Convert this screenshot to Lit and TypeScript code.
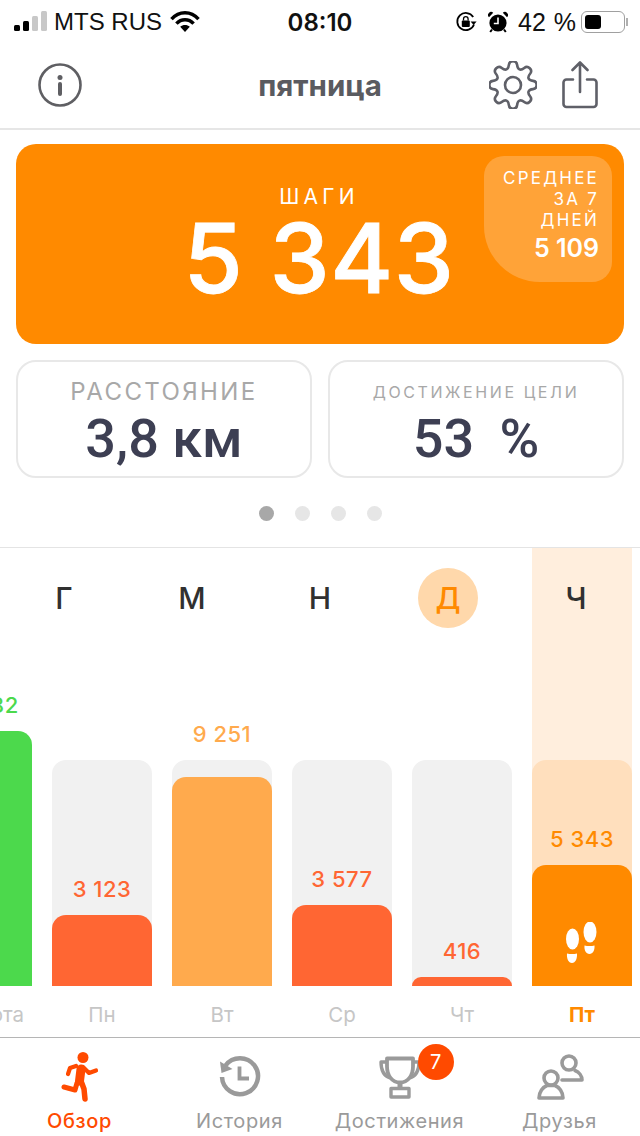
import { LitElement, css, html, svg } from "lit";
import { customElement } from "lit/decorators.js";

interface DayBar {
  day: string;
  value: string;
  fill: number;
  color: string;
  gap: number;
  today?: boolean;
}

const ORANGE = "#ff8a00";
const RED = "#ff6633";

const bars: DayBar[] = [
  { day: "Суббота", value: "10 682", fill: 255, color: "#4cd94c", gap: 12 },
  { day: "Пн", value: "3 123", fill: 71, color: RED, gap: 12 },
  { day: "Вт", value: "9 251", fill: 209, color: "#ffaa4d", gap: 29 },
  { day: "Ср", value: "3 577", fill: 81, color: RED, gap: 12 },
  { day: "Чт", value: "416", fill: 9, color: RED, gap: 12 },
  { day: "Пт", value: "5 343", fill: 121, color: ORANGE, gap: 12, today: true },
];

const letters = ["Г", "М", "Н", "Д", "Ч"];
const dots = [true, false, false, false];

// rounded 8-tooth outline, corners smoothed through edge midpoints
function gearPath(cx: number, cy: number, outer: number, inner: number): string {
  const step = Math.PI / 4;
  const pts: [number, number][] = [];
  for (let i = 0; i < 8; i++) {
    const a = -Math.PI / 2 + i * step;
    const ring: [number, number][] = [
      [inner, a - 0.34 * step],
      [outer, a - 0.2 * step],
      [outer, a + 0.2 * step],
      [inner, a + 0.34 * step],
    ];
    for (const [r, t] of ring) {
      pts.push([cx + r * Math.cos(t), cy + r * Math.sin(t)]);
    }
  }
  const mid = (p: number[], q: number[]) =>
    `${((p[0] + q[0]) / 2).toFixed(2)} ${((p[1] + q[1]) / 2).toFixed(2)}`;
  let d = `M${mid(pts[pts.length - 1], pts[0])}`;
  pts.forEach((p, i) => {
    d += `Q${p[0].toFixed(2)} ${p[1].toFixed(2)} ${mid(p, pts[(i + 1) % pts.length])}`;
  });
  return d + "Z";
}

const wifiIcon = svg`<svg width="30" height="22" viewBox="0 0 30 22" fill="none" stroke="#000" stroke-width="3.4">
  <path d="M1.5 8.2C9-.4 21-.4 28.5 8.2" />
  <path d="M6.4 12.6c4.8-5.2 12.4-5.2 17.2 0" />
  <path d="M15 21l-4.8-5.2c2.7-2.4 6.9-2.4 9.6 0z" fill="#000" stroke="none" />
</svg>`;

const lockIcon = svg`<svg width="22" height="22" viewBox="0 0 22 22" fill="none">
  <path d="M19 13.5A8.6 8.6 0 1 1 18.2 6" stroke="#000" stroke-width="1.8" />
  <path d="M21.6 10.4h-6l3 3.6z" fill="#000" />
  <rect x="6.8" y="9.5" width="8" height="6.5" rx="1" fill="#000" />
  <path d="M8.5 9.5V8a2.3 2.3 0 0 1 4.6 0v1.5" stroke="#000" stroke-width="1.3" />
</svg>`;

const alarmIcon = svg`<svg width="20" height="22" viewBox="0 0 20 22">
  <circle cx="10" cy="12" r="8.6" fill="#000" />
  <path d="M1 6.2 5.2 1.8a3 3 0 0 0-4.2 4.4zM19 6.2l-4.2-4.4A3 3 0 0 1 19 6.2z" fill="#000" />
  <path d="M10 6.5v6H5.8" fill="none" stroke="#fff" stroke-width="1.6" />
  <path d="M4 18.5l-1.8 2.5M16 18.5l1.8 2.5" stroke="#000" stroke-width="2" />
</svg>`;

const infoIcon = svg`<svg width="44" height="44" viewBox="0 0 44 44" fill="none">
  <circle cx="22" cy="22" r="20.5" stroke="#5f5f63" stroke-width="2.6" />
  <circle cx="22" cy="14.5" r="2.5" fill="#5f5f63" />
  <path d="M22 21v10" stroke="#5f5f63" stroke-width="4" stroke-linecap="round" />
</svg>`;

const gearIcon = svg`<svg width="48" height="48" viewBox="0 0 48 48" fill="none" stroke="#5f6068" stroke-width="2.6">
  <path d=${gearPath(24, 24, 24, 17)} />
  <circle cx="24" cy="24" r="8" />
</svg>`;

const shareIcon = svg`<svg width="36" height="48" viewBox="0 0 36 48" fill="none" stroke="#5f6068" stroke-width="2.6" stroke-linecap="round" stroke-linejoin="round">
  <path d="M11 18.5H4.5a3 3 0 0 0-3 3V43a3 3 0 0 0 3 3h27a3 3 0 0 0 3-3V21.5a3 3 0 0 0-3-3H25" />
  <path d="M18 31V2M10.5 9 18 1.5 25.500 9" />
</svg>`;

const footprints = svg`<svg width="34" height="44" viewBox="0 0 34 44" fill="#fff">
  <ellipse cx="7.5" cy="17" rx="6.5" ry="10.5" />
  <path d="M2 31.500c3 .8 7 .8 10 0 .4 5-1.500 9.500-5 9.500s-5.500-4.500-5-9.500z" />
  <ellipse cx="25" cy="10" rx="6.5" ry="10.5" />
  <path d="M19.500 23.500c3 .8 7 .8 10 0 .4 4.500-1.500 8.500-5 8.500s-5.500-4-5-8.500z" />
</svg>`;

const runnerIcon = svg`<svg width="48" height="54" viewBox="0 0 48 54" fill="none" stroke="#ff4a00" stroke-linecap="round" stroke-linejoin="round">
  <circle cx="27" cy="7.5" r="5.5" fill="#ff4a00" stroke="none" />
  <path d="M25 19l-1.500 12" stroke-width="9" />
  <path d="M27 17l6 6 7-2.500M20 16l-6 2-2 6" stroke-width="4.2" />
  <path d="M25 31l3 8 1 10" stroke-width="5.5" />
  <path d="M21 33l-2 7-11-3" stroke-width="5" />
</svg>`;

const historyIcon = svg`<svg width="44" height="44" viewBox="0 0 44 44" fill="none" stroke="#9a9a9a" stroke-width="4.5">
  <path d="M7.500 10.500A18 18 0 1 1 4 22" />
  <path d="M2 6.500l1.500 11.500L14.500 14z" fill="#9a9a9a" stroke="none" />
  <path d="M21.500 11.500V23.500H31" stroke-width="3.8" />
</svg>`;

const trophyIcon = svg`<svg width="44" height="44" viewBox="0 0 44 44" fill="none" stroke="#9a9a9a" stroke-width="3.4" stroke-linejoin="round">
  <path d="M9 3.500h26v8c0 9-5 16-13 16s-13-7-13-16z" fill="#fff" stroke-width="3.8" />
  <path d="M9 7H3c0 9 3 14 9 16M35 7h6c0 9-3 14-9 16" />
  <path d="M22 27v8" stroke-width="5" />
  <rect x="13" y="33.5" width="18" height="8.5" />
</svg>`;

const friendsIcon = svg`<svg width="48" height="48" viewBox="0 0 48 48" fill="none" stroke="#9a9a9a" stroke-width="3.6" stroke-linecap="round" stroke-linejoin="round">
  <circle cx="33" cy="10" r="7" />
  <path d="M26 27h20c0-4-3-8-7-9.500" />
  <circle cx="15" cy="25" r="7" />
  <path d="M3 45c0-6 4-11 8-12.500h8c4 1.500 8 6.500 8 12.500z" />
</svg>`;

@customElement("app-root")
export class AppRoot extends LitElement {
  static styles = css`
    :host {
      display: flex;
      flex-direction: column;
      width: 640px;
      height: 1136px;
      overflow: hidden;
      background: #fff;
      font-family: Inter, "Noto Sans", sans-serif;
    }

    .status {
      display: grid;
      grid-template-columns: 1fr auto 1fr;
      align-items: center;
      height: 44px;
      padding: 0 12px 0 14px;
      font-size: 23px;
      color: #111;
    }
    .status-left,
    .status-right {
      display: flex;
      align-items: center;
    }
    .status-right {
      justify-content: flex-end;
    }
    .signal {
      display: flex;
      align-items: flex-end;
      gap: 3px;
      height: 20px;
      margin: -2px 7px 0 0;
    }
    .signal i {
      width: 6px;
      border-radius: 1.5px;
      background: #000;
    }
    .signal i.off {
      background: #c8c8c8;
    }
    .carrier {
      margin-right: 8px;
      font-family: "Liberation Sans", sans-serif;
      font-size: 24px;
    }
    .time {
      font-weight: 600;
      font-size: 24px;
      margin-left: -2px;
    }
    .gap {
      width: 11px;
    }
    .pct {
      margin: 0 5px 0 10px;
      font-family: "Liberation Sans", sans-serif;
      font-size: 25px;
      word-spacing: 1px;
    }
    .battery {
      display: flex;
      align-items: center;
      width: 44px;
      height: 22px;
      padding: 3px;
      box-sizing: border-box;
      border: 1.5px solid #a0a0a0;
      border-radius: 6px;
    }
    .battery i {
      width: 16px;
      height: 14px;
      border-radius: 3px;
      background: #000;
    }
    .battery-cap {
      width: 2px;
      height: 8px;
      margin-left: 1px;
      background: #b0b0b0;
    }

    .topbar {
      display: grid;
      grid-template-columns: 1fr auto 1fr;
      align-items: center;
      height: 86px;
      padding: 0 38px 2px;
      box-sizing: border-box;
      border-bottom: 2px solid #e6e6e6;
    }
    .topbar h1 {
      margin: 0;
      font-size: 29.5px;
      font-weight: 700;
      color: #5a5b60;
    }
    .topbar svg {
      display: block;
    }
    .actions {
      display: flex;
      justify-content: flex-end;
      align-items: center;
      gap: 25px;
      margin-right: 4px;
    }

    .summary {
      display: flex;
      flex-direction: column;
      gap: 16px;
      padding: 14px 16px 0;
    }
    .hero {
      display: flex;
      justify-content: space-between;
      height: 200px;
      padding: 12px;
      box-sizing: border-box;
      border-radius: 20px;
      background: #ff8a00;
      color: #fff;
    }
    .hero-main {
      flex: 1;
      padding-left: 114px;
      padding-top: 28px;
      text-align: center;
      margin-right: -12px;
    }
    .hero-label {
      font-size: 21px;
      letter-spacing: 4.2px;
      line-height: 26px;
    }
    .hero-value {
      margin-top: 10px;
      font-size: 96px;
      line-height: 76px;
      font-weight: 500;
      letter-spacing: 0.5px;
      -webkit-text-stroke: 0.8px #fff;
    }
    .avg {
      width: 128px;
      height: 126px;
      padding: 12px 13px 0 0;
      box-sizing: border-box;
      border-radius: 20px 20px 20px 56px;
      background: rgba(255, 255, 255, 0.22);
      text-align: right;
      font-size: 17px;
      line-height: 21px;
      letter-spacing: 2.2px;
    }
    .avg b {
      display: block;
      margin-top: 7px;
      font-size: 25px;
      font-weight: 600;
      letter-spacing: 0;
    }
    .stats {
      display: grid;
      grid-template-columns: 1fr 1fr;
      gap: 16px;
    }
    .stat {
      height: 118px;
      box-sizing: border-box;
      padding-top: 15px;
      border: 2px solid #e8e8e8;
      border-radius: 20px;
      text-align: center;
    }
    .stat-label {
      height: 30px;
      line-height: 30px;
      font-size: 24px;
      letter-spacing: 2.4px;
      color: #a8a8a8;
    }
    .stat-label.small {
      font-size: 16px;
      letter-spacing: 2.6px;
    }
    .stat-value {
      margin-top: 2px;
      font-family: Roboto, sans-serif;
      font-size: 54px;
      line-height: 60px;
      font-weight: 500;
      color: #3d3f53;
    }
    .stat-value.wide {
      word-spacing: 12px;
    }
    .dots {
      display: flex;
      justify-content: center;
      gap: 21px;
      padding: 28px 0 26px;
    }
    .dots i {
      width: 15px;
      height: 15px;
      border-radius: 50%;
      background: #e6e6e6;
    }
    .dots i.on {
      background: #a8a8a8;
    }

    .chart {
      position: relative;
      flex: 1;
      display: flex;
      flex-direction: column;
      overflow: hidden;
      border-top: 1px solid #e4e4e4;
    }
    .today-band {
      position: absolute;
      left: 532px;
      top: 0;
      width: 100px;
      height: 240px;
      background: #ffeedd;
    }
    .letters {
      position: relative;
      display: grid;
      grid-template-columns: repeat(5, 128px);
      height: 100px;
      align-items: center;
      text-align: center;
      font-size: 30px;
      font-weight: 500;
      color: #303030;
    }
    .letters span {
      justify-self: center;
      width: 60px;
      height: 60px;
      line-height: 60px;
    }
    .letters .current {
      border-radius: 50%;
      background: #ffd8ab;
      color: #ff8a00;
    }
    .columns {
      position: relative;
      display: grid;
      grid-template-columns: repeat(6, 100px);
      gap: 20px;
      margin: 112px 0 0 -68px;
    }
    .col {
      display: flex;
      flex-direction: column;
      align-items: stretch;
    }
    .track {
      display: flex;
      flex-direction: column;
      justify-content: flex-end;
      height: 226px;
      border-radius: 14px 14px 0 0;
      background: #f1f1f1;
    }
    .track.today {
      background: #ffdfbd;
    }
    .val {
      flex: none;
      text-align: center;
      font-size: 22px;
      line-height: 28px;
      letter-spacing: 0.5px;
      font-weight: 500;
    }
    .fill {
      flex: none;
      display: flex;
      align-items: flex-end;
      justify-content: center;
      border-radius: 14px 14px 0 0;
    }
    .fill svg {
      margin-bottom: 20px;
    }
    .day {
      height: 50px;
      line-height: 58px;
      text-align: center;
      white-space: nowrap;
      font-size: 20.5px;
      color: #c6c6c6;
    }
    .day.today {
      font-weight: 700;
      color: #ff8a00;
    }

    nav {
      display: grid;
      grid-template-columns: repeat(4, 160px);
      height: 99px;
      box-sizing: border-box;
      border-top: 1px solid #b5b5b5;
      background: #fff;
    }
    .tab {
      display: flex;
      flex-direction: column;
      align-items: center;
      font-size: 20px;
      letter-spacing: 0.6px;
      color: #9a9a9a;
    }
    .tab.active {
      font-weight: 500;
      color: #ff4a00;
    }
    .tab-icon {
      position: relative;
      display: flex;
      align-items: center;
      justify-content: center;
      height: 71px;
      padding-top: 6px;
      box-sizing: border-box;
    }
    .tab-label {
      line-height: 24px;
      margin-left: -1px;
    }
    .badge {
      position: absolute;
      left: 40px;
      top: 6px;
      width: 36px;
      height: 36px;
      border-radius: 50%;
      background: #ff4a00;
      color: #fff;
      font-size: 20px;
      line-height: 36px;
      text-align: center;
    }
  `;

  private renderBar(bar: DayBar) {
    return html`
      <div class="col">
        <div class="track ${bar.today ? "today" : ""}">
          <div class="val" style="color:${bar.color};margin-bottom:${bar.gap}px">
            ${bar.value}
          </div>
          <div class="fill" style="height:${bar.fill}px;background:${bar.color}">
            ${bar.today ? footprints : ""}
          </div>
        </div>
        <div class="day ${bar.today ? "today" : ""}">${bar.day}</div>
      </div>
    `;
  }

  protected render() {
    return html`
      <div class="status">
        <div class="status-left">
          <div class="signal">
            <i style="height:6px"></i><i style="height:10px"></i>
            <i class="off" style="height:15px"></i>
            <i class="off" style="height:20px"></i>
          </div>
          <span class="carrier">MTS RUS</span>
          ${wifiIcon}
        </div>
        <div class="time">08:10</div>
        <div class="status-right">
          ${lockIcon}
          <span class="gap"></span>
          ${alarmIcon}
          <span class="pct">42 %</span>
          <div class="battery"><i></i></div>
          <div class="battery-cap"></div>
        </div>
      </div>

      <header class="topbar">
        <div>${infoIcon}</div>
        <h1>пятница</h1>
        <div class="actions">${gearIcon}${shareIcon}</div>
      </header>

      <section class="summary">
        <div class="hero">
          <div class="hero-main">
            <div class="hero-label">ШАГИ</div>
            <div class="hero-value">5 343</div>
          </div>
          <div class="avg">СРЕДНЕЕ<br />ЗА 7<br />ДНЕЙ<b>5 109</b></div>
        </div>
        <div class="stats">
          <div class="stat">
            <div class="stat-label">РАССТОЯНИЕ</div>
            <div class="stat-value">3,8 км</div>
          </div>
          <div class="stat">
            <div class="stat-label small">ДОСТИЖЕНИЕ ЦЕЛИ</div>
            <div class="stat-value wide">53 %</div>
          </div>
        </div>
      </section>
      <div class="dots">
        ${dots.map((on) => html`<i class=${on ? "on" : ""}></i>`)}
      </div>

      <section class="chart">
        <div class="today-band"></div>
        <div class="letters">
          ${letters.map(
            (l, i) => html`<span class=${i === 3 ? "current" : ""}>${l}</span>`
          )}
        </div>
        <div class="columns">${bars.map((b) => this.renderBar(b))}</div>
      </section>

      <nav>
        <div class="tab active">
          <div class="tab-icon">${runnerIcon}</div>
          <div class="tab-label">Обзор</div>
        </div>
        <div class="tab">
          <div class="tab-icon">${historyIcon}</div>
          <div class="tab-label">История</div>
        </div>
        <div class="tab">
          <div class="tab-icon">${trophyIcon}<span class="badge">7</span></div>
          <div class="tab-label">Достижения</div>
        </div>
        <div class="tab">
          <div class="tab-icon">${friendsIcon}</div>
          <div class="tab-label">Друзья</div>
        </div>
      </nav>
    `;
  }
}
